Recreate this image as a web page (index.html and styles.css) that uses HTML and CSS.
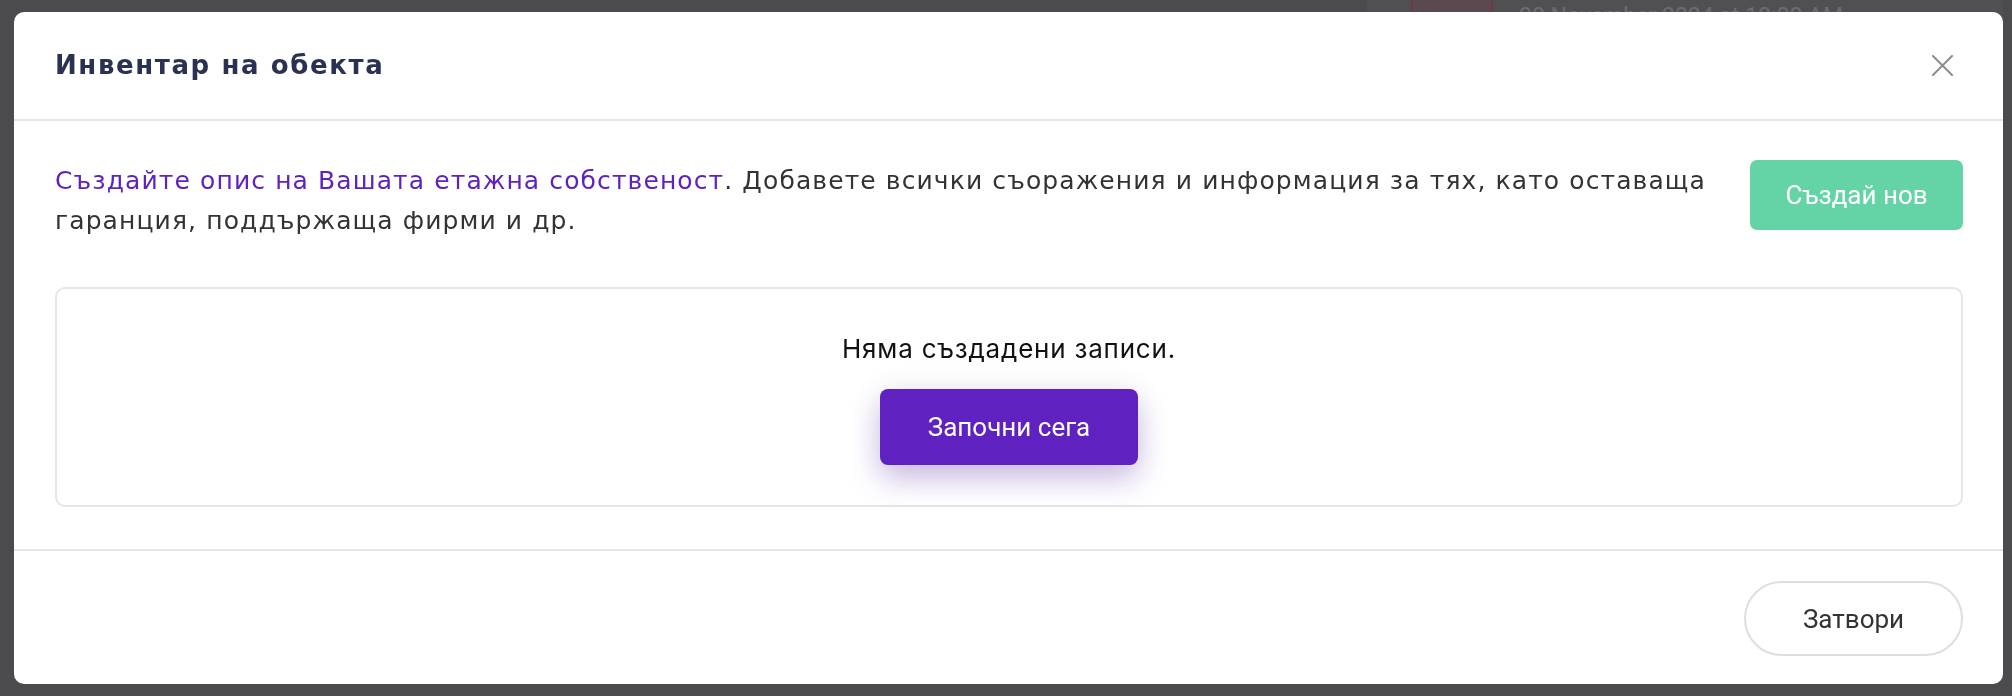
FILE: index.html
```html
<!DOCTYPE html>
<html lang="bg">
<head>
    <meta charset="utf-8">
    <title>Инвентар на обекта</title>
    <link rel="stylesheet" href="styles.css">
</head>
<body>
    <div class="page">
        <div class="page-top">
            <div class="page-panel">
                <div class="event-mark"></div>
                <span class="event-date" lang="en">30 November 2024 at 10:00 AM</span>
            </div>
        </div>
    </div>

    <div class="overlay">
        <div class="modal">
            <div class="modal-header">
                <h2 class="modal-title">Инвентар на обекта</h2>
                <button class="modal-close" aria-label="Затвори">
                    <svg width="21" height="21" viewBox="0 0 21 21">
                        <path d="M1 1 L20 20 M20 1 L1 20" stroke="#8d8d8d" stroke-width="2" fill="none" stroke-linecap="round"/>
                    </svg>
                </button>
            </div>

            <div class="modal-body">
                <div class="intro">
                    <p class="intro-text"><a href="#" class="intro-link">Създайте опис на Вашата етажна собственост</a>. Добавете всички съоражения и информация за тях, като оставаща гаранция, поддържаща фирми и др.</p>
                    <button class="btn btn-create">Създай нов</button>
                </div>

                <div class="empty">
                    <p class="empty-text">Няма създадени записи.</p>
                    <button class="btn btn-start">Започни сега</button>
                </div>
            </div>

            <div class="modal-footer">
                <button class="btn btn-close">Затвори</button>
            </div>
        </div>
    </div>
</body>
</html>
```

FILE: styles.css
```css
body {
    margin: 0;
    font-family: Inter, 'Noto Sans', sans-serif;
    background-color: #4b4b4d;
    color: #333;
    height: 100vh;
    overflow: hidden;
}

.page-top {
    display: flex;
    justify-content: flex-end;
    padding-right: 9px;
}

.page-panel {
    box-sizing: border-box;
    width: 636px;
    height: 40px;
    display: flex;
    align-items: flex-start;
    gap: 26px;
    padding-left: 44px;
    background-color: #505052;
}

.event-mark {
    width: 78px;
    height: 40px;
    border-left: 2px solid #6a3a48;
    border-right: 2px solid #6a3a48;
    background-color: #5a4a50;
    border-radius: 0 0 30px 30px;
}

.event-date {
    font-family: Roboto, 'Liberation Sans', sans-serif;
    font-size: 23px;
    line-height: 30px;
    color: #6c6c6e;
    margin-top: 2px;
}

.overlay {
    position: fixed;
    top: 0;
    left: 0;
    right: 0;
    bottom: 0;
    padding: 12px 9px 0 14px;
}

.modal {
    background-color: #fff;
    border-radius: 10px;
    height: 672px;
    display: flex;
    flex-direction: column;
    overflow: hidden;
}

.modal-header {
    display: flex;
    justify-content: space-between;
    align-items: center;
    padding: 32px 40px 33px 41px;
    border-bottom: 2px solid #e6e6e6;
}

.modal-title {
    margin: 0;
    font-family: 'DejaVu Sans', Inter, sans-serif;
    font-size: 26px;
    line-height: 40px;
    font-weight: 700;
    letter-spacing: 1.6px;
    color: #2a3152;
}

.modal-close {
    width: 42px;
    height: 42px;
    padding: 0;
    border: none;
    background: none;
    display: flex;
    align-items: center;
    justify-content: center;
    cursor: pointer;
}

.modal-body {
    padding: 40px 40px 42px 41px;
}

.intro {
    display: flex;
    align-items: flex-start;
    gap: 16px;
}

.intro-text {
    flex: 1;
    margin: 0;
    font-family: 'DejaVu Sans', Inter, sans-serif;
    font-size: 25px;
    line-height: 40px;
    letter-spacing: 1.1px;
    color: #333;
}

.intro-link {
    color: #5f22c2;
    text-decoration: none;
}

.btn {
    font-family: Roboto, 'Liberation Sans', sans-serif;
    font-size: 26px;
    cursor: pointer;
}

.btn-create {
    width: 213px;
    height: 70px;
    margin-top: -1px;
    border: none;
    border-radius: 7px;
    background-color: #64d4a6;
    color: #fff;
}

.empty {
    margin-top: 46px;
    border: 2px solid #e6e6e6;
    border-radius: 10px;
    padding: 40px;
    display: flex;
    flex-direction: column;
    align-items: center;
    gap: 20px;
}

.empty-text {
    margin: 0;
    font-size: 26px;
    line-height: 40px;
    letter-spacing: 0.8px;
    color: #111;
}

.btn-start {
    width: 258px;
    height: 76px;
    border: none;
    border-radius: 8px;
    background-color: #5f22c0;
    color: #fff;
    box-shadow: 0 14px 30px rgba(80, 34, 170, 0.28), 0 0 34px rgba(0, 0, 0, 0.05);
}

.modal-footer {
    border-top: 2px solid #e6e6e6;
    padding: 30px 40px;
    display: flex;
    justify-content: flex-end;
}

.btn-close {
    width: 219px;
    height: 75px;
    border: 2px solid #dedede;
    border-radius: 38px;
    background-color: #fff;
    color: #333;
}
```
